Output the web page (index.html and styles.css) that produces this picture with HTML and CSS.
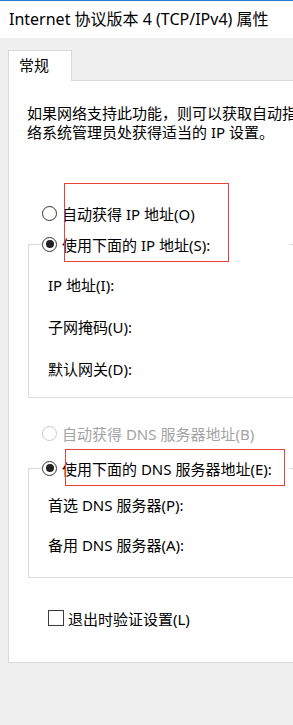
FILE: index.html
```html
<!DOCTYPE html>
<html lang="zh-CN">
<head>
<meta charset="utf-8">
<title>Internet 协议版本 4 (TCP/IPv4) 属性</title>
<link rel="stylesheet" href="styles.css">
</head>
<body>
<div class="window">
  <div class="titlebar">Internet 协议版本 4 (TCP/IPv4) 属性</div>
  <div class="client">
    <div class="tabs"><div class="tab">常规</div></div>
    <div class="panel">
      <p class="intro">如果网络支持此功能，则可以获取自动指派的 IP 设置。否则，你需要从网<br>络系统管理员处获得适当的 IP 设置。</p>

      <div class="section">
        <label class="option first"><span class="radio"></span><span>自动获得 IP 地址(O)</span></label>
        <fieldset class="group group-ip">
          <legend class="option"><span class="radio checked"></span><span>使用下面的 IP 地址(S):</span></legend>
          <div class="field">IP 地址(I):</div>
          <div class="field">子网掩码(U):</div>
          <div class="field">默认网关(D):</div>
        </fieldset>

        <label class="option disabled dns-auto"><span class="radio"></span><span>自动获得 DNS 服务器地址(B)</span></label>
        <fieldset class="group group-dns">
          <legend class="option"><span class="radio checked"></span><span>使用下面的 DNS 服务器地址(E):</span></legend>
          <div class="field short">首选 DNS 服务器(P):</div>
          <div class="field short">备用 DNS 服务器(A):</div>
        </fieldset>

        <label class="check-row"><span class="checkbox"></span><span>退出时验证设置(L)</span></label>
      </div>
    </div>
  </div>
  <div class="mark mark-ip"></div>
  <div class="mark mark-dns"></div>
</div>
</body>
</html>
```

FILE: styles.css
```css
html, body {
  margin: 0;
  padding: 0;
}
body {
  width: 293px;
  height: 725px;
  overflow: hidden;
  background: #f0f0f0;
  font-family: "Noto Sans", "Noto Sans CJK SC", sans-serif;
  color: #000;
}
.window {
  position: relative;
  width: 293px;
  height: 725px;
  overflow: hidden;
}
.titlebar {
  height: 37px;
  border-top: 1px solid #2b7bd4;
  background: #fff;
  padding-left: 9px;
  font-size: 16px;
  line-height: 37px;
  white-space: nowrap;
}
.client {
  padding-top: 12px;
  padding-left: 8px;
}
.tabs {
  display: flex;
  position: relative;
  z-index: 1;
}
.tab {
  width: 62px;
  height: 31px;
  border: 1px solid #d9d9d9;
  border-bottom: none;
  background: #fff;
  font-size: 15px;
  line-height: 29px;
  padding-left: 10px;
  box-sizing: border-box;
  width: 64px;
}
.panel {
  margin-top: -1px;
  width: 330px;
  height: 583px;
  box-sizing: border-box;
  border: 1px solid #dadada;
  background: #fff;
  padding-left: 18px;
  overflow: hidden;
}
.intro {
  margin: 23px 0 0;
  font-size: 15px;
  line-height: 19px;
  white-space: nowrap;
}
.section {
  margin-left: 1px;
  margin-top: 61px;
}
.option {
  display: flex;
  align-items: center;
  gap: 5px;
  height: 20px;
  font-size: 15px;
  white-space: nowrap;
}
.option.first,
.option.dns-auto {
  padding-left: 14px;
}
.option.dns-auto {
  margin-top: 25px;
}
.radio {
  width: 15px;
  height: 15px;
  box-sizing: border-box;
  border: 1.5px solid #333;
  border-radius: 50%;
  display: flex;
  align-items: center;
  justify-content: center;
  flex: none;
}
.radio.checked::after {
  content: "";
  width: 8px;
  height: 8px;
  border-radius: 50%;
  background: #222;
}
.disabled {
  color: #a3a3a3;
}
.disabled .radio {
  border-color: #c8c8c8;
}
.group {
  margin: 11px 0 0;
  width: 300px;
  box-sizing: border-box;
  border: 1px solid #dcdcdc;
  padding: 10px 0 7px 13px;
  min-inline-size: 0;
}
.group legend {
  padding: 0;
  width: 247px;
}
.group-dns {
  margin-top: 15px;
  padding-top: 7px;
  padding-bottom: 12px;
}
.field {
  height: 42px;
  line-height: 42px;
  padding-left: 6px;
  font-size: 15px;
  white-space: nowrap;
}
.field.short {
  height: 40px;
  line-height: 40px;
}
.check-row {
  display: flex;
  align-items: center;
  gap: 4px;
  height: 20px;
  margin-top: 30px;
  padding-left: 20px;
  font-size: 15px;
}
.checkbox {
  width: 16px;
  height: 16px;
  box-sizing: border-box;
  border: 1.5px solid #3a3a3a;
  flex: none;
}
.mark {
  position: absolute;
  border: 1px solid #e8413a;
  box-sizing: border-box;
  pointer-events: none;
}
.mark-ip {
  left: 64px;
  top: 183px;
  width: 165px;
  height: 79px;
}
.mark-dns {
  left: 65px;
  top: 449px;
  width: 220px;
  height: 37px;
}
```
